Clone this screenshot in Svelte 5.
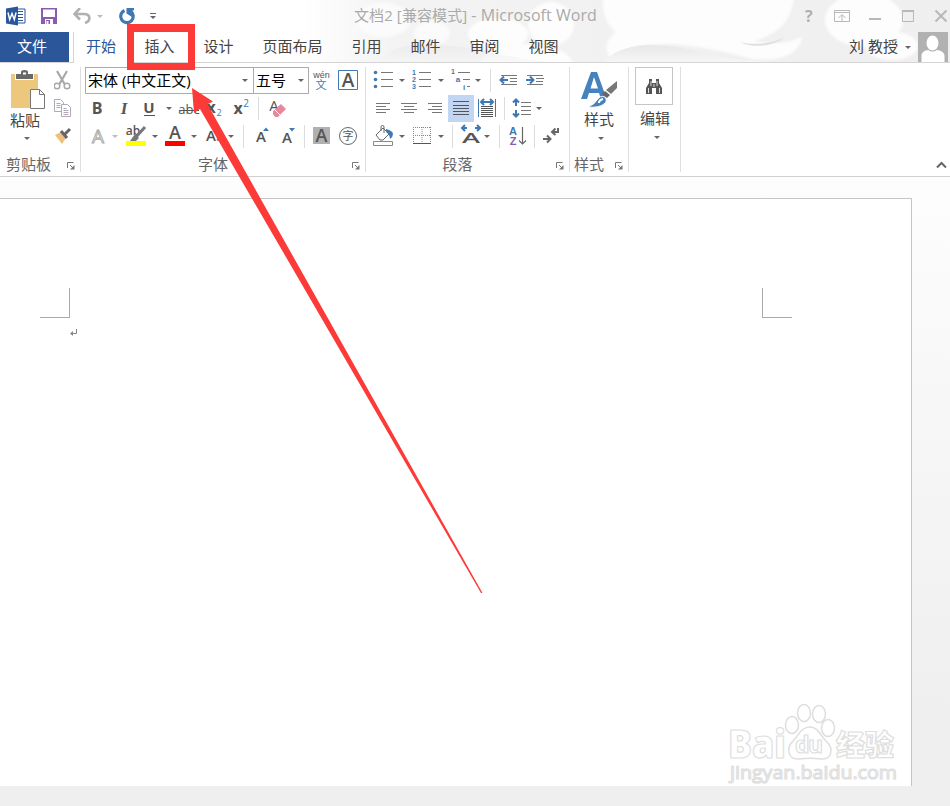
<script>
    const tabs = ["插入", "设计", "页面布局", "引用", "邮件", "审阅", "视图"];
    const fontName = "宋体 (中文正文)";
    const fontSize = "五号";
</script>

{#snippet caret(light = false)}
    <span class="caret" class:light></span>
{/snippet}

{#snippet sep()}
    <span class="sep"></span>
{/snippet}

{#snippet label(text)}
    <div class="group-label">
        <span>{text}</span>
        <svg class="launcher" width="8" height="8" viewBox="0 0 8 8">
            <path d="M.5 6V.5H6.500M3 3l3 3" />
            <path class="solid" d="M7.500 3v4.500H3z" />
        </svg>
    </div>
{/snippet}

<div class="window">
    <header>
        <svg class="clouds" width="950" height="62" viewBox="0 0 950 62">
            <defs>
                <linearGradient id="haze">
                    <stop offset="0" stop-color="#f3f3f3" stop-opacity="0" />
                    <stop offset="0.15" stop-color="#f3f3f3" />
                    <stop offset="1" stop-color="#efefef" />
                </linearGradient>
                <linearGradient id="hill" x1="0" y1="0" x2="0" y2="1">
                    <stop offset="0" stop-color="#e8e8e8" />
                    <stop offset="1" stop-color="#f6f6f6" />
                </linearGradient>
                <filter id="soft">
                    <feGaussianBlur stdDeviation="1.2" />
                </filter>
            </defs>
            <rect x="300" width="650" height="62" fill="url(#haze)" />
            <g fill="#fdfdfd" filter="url(#soft)">
                <ellipse cx="384" cy="20" rx="27" ry="17" opacity=".7" />
                <ellipse cx="432" cy="33" rx="18" ry="12" opacity=".7" />
                <ellipse cx="498" cy="34" rx="30" ry="16" />
                <ellipse cx="551" cy="24" rx="23" ry="22" />
                <path d="M480 64c5-14 28-22 54-19s34 7 40 19z" />
                <path d="M603-4h191c-2 24-15 38-40 45 20 4 36 2 48-4-2 16-20 25-50 22-30-8-70-18-104-14-18 2-28 7-36 14-8-6-8-18 4-27-10-8-14-20-13-36z" />
                <ellipse cx="864" cy="20" rx="39" ry="27" />
                <ellipse cx="892" cy="46" rx="26" ry="14" />
            </g>
            <path d="M604 62c8-10 22-16 44-17 48 0 70 17 134 17z" fill="url(#hill)" />
            <path d="M380 62c10-16 30-18 56-17 40 1 60 12 116 17z" fill="url(#hill)" opacity=".6" />
            <path d="M740 42c16 4 34 1 45-5-10 9-32 12-45 5z" fill="#e0e0e0" />
        </svg>

        <div class="titlebar">
            <div class="quick">
                <svg width="20" height="20" viewBox="0 0 20 20">
                    <path d="M11 3h8v14h-8z" fill="#fff" stroke="#2b579a" />
                    <path d="M12 5.500h5M12 8.500h5M12 11.500h5M12 14.500h5" stroke="#2b579a" />
                    <path d="M0 2.500L12 .5v19L0 17.500z" fill="#2b579a" />
                    <path d="M2 6.500l1.700 7L6 7.500l2.300 6 1.800-7" fill="none" stroke="#fff" stroke-width="1.500" />
                </svg>
                <svg width="16" height="16" viewBox="0 0 16 16">
                    <path d="M0 0h16v16H0z" fill="#8a5bb0" />
                    <path d="M2 1.500h12V9H2zM4 11h8v5H4z" fill="#fff" />
                    <path d="M5 12h4v4H5z" fill="#8a5bb0" />
                    <path d="M5.500 13h2v3h-2z" fill="#fff" />
                </svg>
                <svg width="18" height="16" viewBox="0 0 18 16">
                    <path d="M2 6h9c7 0 7 7 1 9" fill="none" stroke="#b1b1b1" stroke-width="2.600" />
                    <path d="M7 0L1.500 6 7 11.500" fill="none" stroke="#b1b1b1" stroke-width="2.600" />
                </svg>
                {@render caret(true)}
                <svg width="18" height="17" viewBox="0 0 18 17">
                    <path d="M6.500 2.500a6.300 6.300 0 1 0 6 .6" fill="none" stroke="#3f78b5" stroke-width="3.200" />
                    <path d="M8.500 0H16v2l-2 1v6L8.500 5.500z" fill="#3f78b5" />
                </svg>
                <svg width="6" height="7" viewBox="0 0 6 7">
                    <path d="M0 .5h6" stroke="#666" />
                    <path d="M0 3h6L3 6z" fill="#666" />
                </svg>
            </div>
            <h1>文档2 [兼容模式] <span>- Microsoft Word</span></h1>
            <svg class="controls" width="150" height="32" viewBox="0 0 150 32">
                <text x="5" y="22" font-size="16" font-weight="700">?</text>
                <path d="M34.500 10.500h15v11h-15zM34 12.500h16M42 21v-6M38.500 18l3.500-3.500 3.500 3.500" />
                <path d="M69 19h12" stroke-width="2" />
                <path d="M102.500 11v10.500h11V11M102 11.500h12" />
                <path d="M102 11h12" stroke-width="2" />
                <path d="M135.500 10.500l11 11M146.500 10.500l-11 11" stroke-width="2" />
            </svg>
        </div>

        <nav>
            <button class="file">文件</button>
            <button class="tab active">开始</button>
            {#each tabs as tab}
                <button class="tab">{tab}</button>
            {/each}
            <div class="user">
                <span>刘 教授</span>
                {@render caret()}
                <svg width="30" height="30" viewBox="0 0 30 30">
                    <path d="M0 0h30v30H0z" fill="#b1b1b1" />
                    <ellipse cx="14.500" cy="11" rx="6" ry="7.500" fill="#fff" />
                    <path d="M3.500 30v-6c0-4 3-5.500 7-6 2 2 6 2 8 0 4 .5 8 2 8 6v6z" fill="#fff" />
                </svg>
            </div>
        </nav>
    </header>

    <section class="ribbon">
        <div class="group clipboard">
            <div class="body">
                <div class="big">
                    <svg width="36" height="42" viewBox="0 0 36 42">
                        <path d="M0 4h27v34H0z" fill="#edc77b" />
                        <path d="M4 10V4h5V2q0-2 4.500-2T18 2v2h5v6z" fill="#fff" />
                        <path d="M5 4h5V2q0-2 3.500-2T17 2v2h5v5H5z" fill="#686868" />
                        <path d="M12 2.500h3v2h-3z" fill="#fff" />
                        <path d="M19.500 19.500h9l5 5v14h-14z" fill="#fff" stroke="#777" />
                        <path d="M28.500 19.500v5h5" fill="none" stroke="#777" />
                    </svg>
                    <span>粘贴</span>
                    {@render caret()}
                </div>
                <div class="side">
                    <svg width="18" height="28" viewBox="0 0 18 28">
                        <g fill="none" stroke="#a8a8a8">
                            <path d="M3 5l7.500 13M13 5L5.500 18" stroke-width="2.200" />
                            <circle cx="3" cy="20" r="2.800" stroke-width="1.500" />
                            <circle cx="13" cy="20" r="2.800" stroke-width="1.500" />
                        </g>
                    </svg>
                    <svg width="18" height="28" viewBox="0 0 18 28">
                        <g fill="#fff" stroke="#b0a8b4">
                            <path d="M.5 5.500h6l3 3v9h-9z" />
                            <path d="M2.500 9.500h4M2.500 11.500h4M2.500 13.500h4" />
                            <path d="M7.500 10.500h6l3 3v9h-9z" />
                            <path d="M9.500 14.500h3M9.500 16.500h5M9.500 18.500h5M9.500 20.500h5" />
                        </g>
                    </svg>
                    <svg width="18" height="28" viewBox="0 0 18 28">
                        <path d="M1 13l6-3 5 6-4 6z" fill="#edc07b" />
                        <path d="M7 9l6 7M11 12l5-5" fill="none" stroke="#666" stroke-width="3" />
                    </svg>
                </div>
            </div>
            {@render label("剪贴板")}
        </div>

        <div class="group font">
            <div class="row combos">
                <div class="combo name"><span>{fontName}</span>{@render caret()}</div>
                <div class="combo size"><span>{fontSize}</span>{@render caret()}</div>
                <svg width="26" height="28" viewBox="0 0 26 28">
                    <text x="12.500" y="12" font-size="9" class="plain">wén</text>
                    <text x="12" y="23" font-size="11" class="blue plain">文</text>
                </svg>
                <svg width="26" height="28" viewBox="0 0 26 28">
                    <path d="M3.500 4.500h19v19h-19z" fill="none" stroke="#4078b8" />
                    <text x="13" y="20.500" font-size="19" class="semi">A</text>
                </svg>
            </div>
            <div class="row styles-row">
                <svg width="24" height="28"><text x="12" y="20" font-size="16" font-weight="700">B</text></svg>
                <svg width="27" height="28"><text x="15" y="20" font-size="17" class="italic">I</text></svg>
                <svg width="26" height="28">
                    <text x="13" y="19" font-size="15" font-weight="700">U</text>
                    <path d="M8 21.500h11" stroke="#555" />
                </svg>
                {@render caret()}
                <svg width="26" height="28">
                    <text x="13" y="20" font-size="13">abc</text>
                    <path d="M3 16.500h20" stroke="#555" />
                </svg>
                <svg width="26" height="28">
                    <text x="9" y="19" font-size="16" font-weight="700">x</text>
                    <text x="17" y="22" font-size="9" class="blue">2</text>
                </svg>
                <svg width="26" height="28">
                    <text x="10" y="20" font-size="16" font-weight="700">x</text>
                    <text x="18" y="13" font-size="10" class="blue">2</text>
                </svg>
                {@render sep()}
                <svg width="30" height="28">
                    <text x="12" y="17" font-size="15">A</text>
                    <path d="M11 17l8-7 5 5-8 8h-3l-2-3z" fill="#e58a9c" />
                    <path d="M12.500 15.500l6 6" stroke="#fff" />
                </svg>
            </div>
            <div class="row effects-row">
                <svg width="24" height="28">
                    <text x="13" y="21" font-size="19" class="outline">A</text>
                </svg>
                {@render caret(true)}
                <svg width="28" height="28">
                    <text x="12" y="13" font-size="12" class="semi">ab</text>
                    <path d="M24 5l-9 10" stroke="#777" stroke-width="3" />
                    <path d="M14 12l4 4-3 3h-6z" fill="#777" />
                    <path d="M5 19h20v5H5z" fill="#ffff00" />
                </svg>
                {@render caret()}
                <svg width="27" height="28">
                    <text x="14" y="17" font-size="18" class="semi">A</text>
                    <path d="M4 19h20v5H4z" fill="#ff0000" />
                </svg>
                {@render caret()}
                <svg width="25" height="28">
                    <text x="11" y="19" font-size="15" class="semi">A</text>
                    <text x="19.500" y="19" font-size="12">a</text>
                </svg>
                {@render caret()}
                {@render sep()}
                <svg width="27" height="28">
                    <text x="12" y="20" font-size="15" class="semi">A</text>
                    <path d="M14 9l3-3.500L20 9z" fill="#3f78b5" />
                </svg>
                <svg width="24" height="28">
                    <text x="11" y="21" font-size="15" class="semi">A</text>
                    <path d="M13 6h6l-3 3.500z" fill="#3f78b5" />
                </svg>
                {@render sep()}
                <svg width="27" height="28">
                    <path d="M5 5h17v17H5z" fill="#b0b0b0" />
                    <text x="13.500" y="20" font-size="18" class="semi">A</text>
                </svg>
                <svg width="26" height="28">
                    <circle cx="13" cy="14" r="8.500" fill="none" stroke="#666" />
                    <text x="13" y="18" font-size="11">字</text>
                </svg>
            </div>
            {@render label("字体")}
        </div>

        <div class="group paragraph">
            <div class="row lists-row">
                <svg width="30" height="28">
                    <path class="rule" d="M15 6.500h12M15 13.500h12M15 20.500h12" />
                    <g fill="#3f78b5">
                        <circle cx="9.500" cy="6.500" r="1.800" />
                        <circle cx="9.500" cy="13.500" r="1.800" />
                        <circle cx="9.500" cy="20.500" r="1.800" />
                    </g>
                </svg>
                {@render caret()}
                <svg width="27" height="28">
                    <path class="rule" d="M11 6.500h12M11 13.500h12M11 20.500h12" />
                    <g class="blue plain" font-size="7" font-weight="700">
                        <text x="6" y="9">1</text>
                        <text x="6" y="16">2</text>
                        <text x="6" y="23">3</text>
                    </g>
                </svg>
                {@render caret()}
                <svg width="25" height="28">
                    <path class="rule" d="M11 6.500h12M16 13.500h7M20 20.500h3" />
                    <g class="blue plain" font-size="7" font-weight="700">
                        <text x="6" y="8">1</text>
                        <text x="11" y="16" font-size="8">a</text>
                        <text x="17" y="24" font-size="8">i</text>
                    </g>
                </svg>
                {@render caret()}
                {@render sep()}
                <svg width="25" height="28">
                    <path class="rule" d="M5 9.500h16M14 12.500h7M14 15.500h7M5 18.500h16" />
                    <path class="arrow" d="M12 14H5M8 10.500L4.500 14 8 17.500" />
                </svg>
                <svg width="26" height="28">
                    <path class="rule" d="M6 9.500h16M15 12.500h8M15 15.500h7M6 18.500h16" />
                    <path class="arrow" d="M5 14h7M9 10.500l3.500 3.500L9 17.500" />
                </svg>
            </div>
            <div class="row align-row">
                <svg width="30" height="28">
                    <path class="rule" d="M10 9.500h14M10 12.500h10M10 15.500h14M10 18.500h10" />
                </svg>
                <svg width="26" height="28">
                    <path class="rule" d="M5 9.500h16M8 12.500h10M5 15.500h16M8 18.500h10" />
                </svg>
                <svg width="26" height="28">
                    <path class="rule" d="M6 9.500h14M10 12.500h10M6 15.500h14M10 18.500h10" />
                </svg>
                <svg class="pressed" width="26" height="27">
                    <path class="rule dark" d="M5 6.500h16M5 10.500h16M5 13.500h16M5 16.500h16M5 19.500h16" />
                </svg>
                <svg width="26" height="28">
                    <path d="M4.500 5v18M21.500 5v18" stroke="#3f78b5" />
                    <path class="arrow" d="M7 8h12M10 5L7 8l3 3M16 5l3 3-3 3" />
                    <path class="rule dark" d="M7 12.500h12M7 14.500h12M7 16.500h12M7 18.500h12M7 20.500h12M7 22.500h12" />
                </svg>
                {@render sep()}
                <svg width="25" height="28">
                    <path class="rule" d="M13 8.500h10M13 12.500h10M13 16.500h10M13 20.500h10" />
                    <path class="arrow" d="M8 6v6M5 8.500L8 5.500l3 3M8 16v6M5 19.500l3 3 3-3" />
                </svg>
                {@render caret()}
            </div>
            <div class="row shade-row">
                <svg width="30" height="28">
                    <path d="M10 13l7-7 6 6-6 6h-3zM15 9V5q0-1.500 1.500-1.500T18 5v6" fill="#fff" stroke="#666" />
                    <path d="M20 7q7 2 7 5t-3 5q0-4-4-7z" fill="#3f78b5" />
                    <path d="M7.500 19.500h19v4h-19z" fill="#fff" stroke="#888" />
                </svg>
                {@render caret()}
                <svg width="27" height="28">
                    <path d="M5.500 5v17M22.500 5v17M14 5v17M5 5.500h17M5 13.500h17" stroke="#888" fill="none" stroke-dasharray="1 1" />
                    <path d="M5 21.500h18" stroke="#555" />
                </svg>
                {@render caret()}
                {@render sep()}
                <svg width="24" height="28">
                    <text x="14" y="21" font-size="15" textLength="18" lengthAdjust="spacingAndGlyphs" class="semi">A</text>
                    <path class="arrow" d="M5 6h5M8 3L5 6l3 3M18 6h5M20 3l3 3-3 3" />
                </svg>
                {@render caret()}
                {@render sep()}
                <svg width="25" height="28">
                    <text x="8" y="13" font-size="11" class="blue plain semi">A</text>
                    <text x="8" y="23" font-size="11" class="purple plain semi">Z</text>
                    <path d="M17.500 5v17M14 18.500l3.500 3.500 3.500-3.500" fill="none" stroke="#666" stroke-width="1.200" />
                </svg>
                {@render sep()}
                <svg width="28" height="28">
                    <path class="arrow grey" d="M20 6v4h-5M17.500 6.500L14 10l3.500 3M5 17h7M9 13.500l3.500 3.500L9 20.500" />
                </svg>
            </div>
            {@render label("段落")}
        </div>

        <div class="group styles">
            <div class="body big">
                <svg width="38" height="38" viewBox="0 0 38 38">
                    <path d="M0 27L10 0h6l9 25-5 2-2-6H8l-2 6zM9.500 16.500h7.500L13 5z" fill="#4682bd" />
                    <path d="M36 9v7l-6 6-5-4z" fill="#777" />
                    <path d="M24 19l5 4-3 3-5-4z" fill="#666" />
                    <path d="M8 34q5-1 8-6 3-5 8-3 3 4-1 7-5 4-15 3z" fill="#4682bd" stroke="#fff" />
                    <path d="M18 31q0-3 4-4" fill="none" stroke="#fff" stroke-width="2" />
                </svg>
                <span>样式</span>
                {@render caret()}
            </div>
            {@render label("样式")}
        </div>

        <div class="group editing">
            <div class="body big">
                <div class="find">
                    <svg width="18" height="17" viewBox="0 0 18 17">
                        <path d="M4 1h3v4h4V1h3v4l3 5v6h-6v-6H7v6H1v-6l3-5z" fill="#555" />
                        <path d="M3.500 10v5M14.500 10v5M6 3v5M12 3v5M9 6v3" stroke="#ddd" />
                    </svg>
                </div>
                <span>编辑</span>
                {@render caret()}
            </div>
        </div>

        <svg class="collapse" width="11" height="8" viewBox="0 0 11 8">
            <path d="M1 6.500L5.500 2 10 6.500" fill="none" stroke="#666" stroke-width="2" />
        </svg>
    </section>

    <main>
        <div class="page">
            <div class="margins">
                <span class="corner left"></span>
                <span class="corner right"></span>
            </div>
            <svg class="mark" width="8" height="8" viewBox="0 0 8 8">
                <path d="M6.500 0v4.500H1" fill="none" stroke="#888" />
                <path d="M3 2v5L0 4.500z" fill="#888" />
            </svg>
            <svg class="watermark" width="184" height="86" viewBox="0 0 184 86">
                <g fill="#fff" stroke="#dedede" stroke-width="1.500">
                    <ellipse cx="76" cy="22" rx="6.500" ry="8.500" />
                    <ellipse cx="91" cy="23" rx="6.500" ry="8.500" />
                    <ellipse cx="64" cy="34" rx="6.500" ry="8.500" />
                    <ellipse cx="100" cy="37" rx="6.500" ry="8.500" />
                    <path d="M82 36c8 0 10 8 16 14 9 8 5 19-5 18-8-1-14-1-22 0-10 1-14-10-6-18 6-6 8-14 17-14z" />
                </g>
                <g class="wm">
                    <text x="0" y="67" font-size="38" font-weight="800" textLength="58" lengthAdjust="spacingAndGlyphs">Bai</text>
                    <text x="67" y="62" font-size="23" font-weight="700" textLength="28">du</text>
                    <text x="108" y="65" font-size="29" font-weight="900" class="cjk" textLength="58">经验</text>
                    <text x="2" y="88" font-size="19" textLength="167" lengthAdjust="spacingAndGlyphs">jingyan.baidu.com</text>
                </g>
            </svg>
        </div>
    </main>

    <!-- callout pointing at the insert tab -->
    <div class="highlight"></div>
    <svg class="pointer" width="950" height="806" viewBox="0 0 950 806">
        <path d="M192 88l21 13.500-5.500 2.800L482.500 593h-1.500L200 109l-6 4z" fill="#fc3a38" />
    </svg>
</div>

<style>
    :global(body) {
        margin: 0;
    }

    .window {
        position: relative;
        display: flex;
        flex-direction: column;
        width: 950px;
        height: 806px;
        overflow: hidden;
        background: #fff;
        color: #444;
        font: 15px/20px "Open Sans", "Noto Sans CJK SC", sans-serif;
    }

    svg {
        display: block;
        flex-shrink: 0;
    }
    button {
        border: 0;
        padding: 0;
        background: none;
        color: inherit;
        font: inherit;
    }
    span {
        white-space: nowrap;
    }

    /* title bar and tabs */
    header {
        position: relative;
        height: 62px;
        border-bottom: 1px solid #d4d4d4;
    }
    .clouds {
        position: absolute;
        inset: 0;
    }
    .titlebar {
        position: relative;
        display: flex;
        height: 32px;
    }
    .quick {
        display: flex;
        align-items: center;
        width: 354px;
        padding-left: 6px;
        box-sizing: border-box;
    }
    .quick svg:nth-child(2) {
        margin-left: 15px;
    }
    .quick svg:nth-child(3) {
        margin: 0 6px 0 16px;
    }
    .quick svg:nth-child(5) {
        margin: 0 14px 0 15px;
    }
    h1 {
        width: 446px;
        margin: 0;
        color: #aaa;
        font-size: 15px;
        font-weight: 400;
        line-height: 31px;
        letter-spacing: 0.1px;
        white-space: nowrap;
    }
    h1 span {
        font-size: 16px;
        letter-spacing: 0.05px;
    }
    .controls {
        fill: none;
        stroke: #b8b8b8;
    }
    .controls text {
        fill: #b0b0b0;
        stroke: none;
    }
    nav {
        position: relative;
        display: flex;
        height: 30px;
        line-height: 28px;
    }
    .file {
        width: 69px;
        padding: 0 5px 2px 0;
        margin-right: 4px;
        background: #2b579a;
        color: #fff;
    }
    .tab {
        padding: 0 14.5px 2px;
    }
    .tab.active {
        height: 31px;
        padding: 0 14px 3px 12px;
        border-left: 1px solid #d4d4d4;
        background: #fff;
        color: #2b579a;
    }
    .user {
        display: flex;
        align-items: center;
        margin: 0 2px 0 auto;
    }
    .user span:first-child {
        padding-bottom: 2px;
    }
    .user .caret {
        margin: 0 7px;
    }

    .caret {
        align-self: center;
        justify-self: center;
        width: 0;
        height: 0;
        border: 3px solid transparent;
        border-top-color: #666;
        border-bottom: 0;
    }
    .caret.light {
        border-top-color: #bbb;
    }
    .sep {
        justify-self: center;
        align-self: center;
        width: 1px;
        height: 23px;
        background: #dcdcdc;
    }

    /* ribbon */
    .ribbon {
        display: flex;
        height: 113px;
        border-bottom: 1px solid #d0d0d0;
    }
    .group {
        position: relative;
        display: flex;
        flex-direction: column;
        box-sizing: border-box;
        padding-top: 3px;
        height: 113px;
    }
    .group::after {
        content: "";
        position: absolute;
        right: 0;
        top: 4px;
        bottom: 4px;
        width: 1px;
        background: #dedede;
    }
    .clipboard {
        width: 81px;
    }
    .font {
        width: 285px;
        padding-left: 4px;
    }
    .paragraph {
        width: 204px;
    }
    .styles {
        width: 59px;
    }
    .editing {
        width: 52px;
    }
    .group-label {
        display: flex;
        flex-shrink: 0;
        align-items: center;
        height: 31px;
        margin-top: auto;
        margin-bottom: -5px;
        padding-bottom: 3px;
        box-sizing: border-box;
        color: #666;
    }
    .group-label span {
        flex: 1;
        text-align: center;
    }
    .font .group-label {
        margin-left: -4px;
    }
    .clipboard .group-label span {
        padding-right: 3px;
    }
    .launcher {
        margin: 3px 6px 0 7px;
        fill: none;
        stroke: #777;
    }
    .launcher .solid {
        fill: #777;
        stroke: none;
    }
    .body {
        display: flex;
        height: 84px;
    }
    .big {
        display: flex;
        flex-direction: column;
        align-items: center;
    }
    .clipboard .big {
        width: 50px;
        padding-top: 4px;
    }
    .clipboard .big svg {
        margin-left: 7px;
    }
    .clipboard .big span:not(.caret) {
        margin: -2px 0 7px;
    }
    .side {
        padding-left: 4px;
    }
    .big .caret {
        margin-left: 3px;
    }
    .styles .big svg {
        margin-top: 6px;
    }
    .styles .big span:not(.caret) {
        margin: -1px 1px 8px 0;
    }
    .find {
        display: flex;
        align-items: center;
        justify-content: center;
        width: 36px;
        height: 36px;
        margin: 1px 2px 3px 0;
        border: 1px solid #c6c6c6;
    }
    .editing .big span:not(.caret) {
        margin-bottom: 8px;
    }

    .row {
        display: grid;
        height: 28px;
    }
    .combos {
        grid-template-columns: 168px 56px 26px 26px;
        align-items: center;
    }
    .styles-row {
        grid-template-columns: 24px 27px 26px 14px 26px 26px 26px 8px 30px;
    }
    .effects-row {
        grid-template-columns: 24px 12px 28px 12px 27px 12px 25px 12px 12px 27px 24px 8px 27px 26px;
    }
    .lists-row {
        grid-template-columns: 30px 12px 27px 12px 25px 12px 12px 25px 26px;
    }
    .align-row {
        grid-template-columns: 30px 26px 26px 26px 26px 8px 25px 12px;
    }
    .shade-row {
        grid-template-columns: 30px 12px 27px 12px 10px 24px 12px 12px 25px 8px 28px;
    }
    .combo {
        display: flex;
        align-items: center;
        justify-content: space-between;
        box-sizing: border-box;
        height: 27px;
        padding: 0 4px 0 2px;
        border: 1px solid #ababab;
        color: #000;
    }
    .combo.name {
        margin-right: -1px;
        padding-right: 5px;
    }
    .pressed {
        margin-top: 1px;
        background: #c2d5f2;
    }

    /* icon parts */
    .row text {
        fill: #555;
        text-anchor: middle;
    }
    .row .semi {
        font-weight: 600;
    }
    .row .italic {
        font-family: "Liberation Serif", serif;
        font-style: italic;
        font-weight: 700;
    }
    .row .plain {
        font-family: "Liberation Sans", "Noto Sans CJK SC", sans-serif;
    }
    .row text.blue,
    .row .blue text {
        fill: #3f78b5;
    }
    .row text.purple {
        fill: #8a5bb0;
    }
    .row text.outline {
        fill: #fff;
        stroke: #aaa;
    }
    .rule {
        stroke: #777;
    }
    .rule.dark {
        stroke: #555;
    }
    .arrow {
        fill: none;
        stroke: #3f78b5;
        stroke-width: 2;
    }
    .arrow.grey {
        stroke: #666;
    }
    .collapse {
        align-self: flex-end;
        margin: 0 3px 7px auto;
    }

    /* document area */
    main {
        flex: 1;
        padding-top: 21px;
        background: linear-gradient(#fdfdfd, #efefef 85%);
    }
    .page {
        position: relative;
        width: 911px;
        height: 587px;
        border-top: 1px solid #c6c6c6;
        border-right: 1px solid #c6c6c6;
        background: #fff;
    }
    .margins {
        display: flex;
        justify-content: space-between;
        padding: 89px 119px 0 40px;
    }
    .corner {
        width: 29px;
        height: 29px;
        border-bottom: 1px solid #aaa;
    }
    .corner.left {
        border-right: 1px solid #aaa;
    }
    .corner.right {
        border-left: 1px solid #aaa;
    }
    .mark {
        margin: 11px 0 0 70px;
    }
    .watermark {
        position: absolute;
        right: -1px;
        bottom: 9px;
        overflow: visible;
    }
    .wm text {
        fill: #fff;
        stroke: #dedede;
        stroke-width: 1.2px;
    }
    .wm .cjk {
        font-family: "Noto Sans CJK SC", sans-serif;
    }

    .highlight {
        position: absolute;
        left: 127px;
        top: 24px;
        width: 54px;
        height: 31px;
        border: 7px solid #fc3a38;
        border-top-width: 8px;
    }
    .pointer {
        position: absolute;
        inset: 0;
        pointer-events: none;
    }
</style>
